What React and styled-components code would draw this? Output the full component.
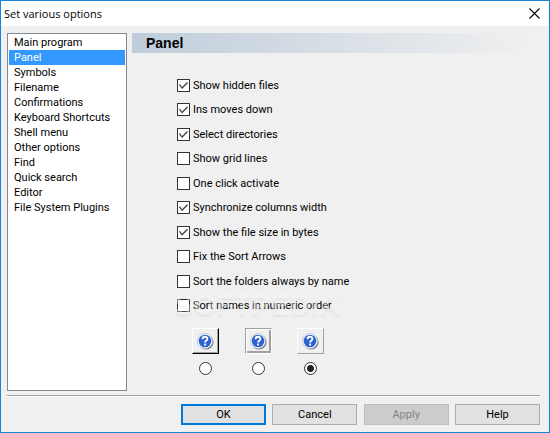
import React, { useState } from "react";
import styled, { createGlobalStyle } from "styled-components";

const sections = [
    "Main program",
    "Panel",
    "Symbols",
    "Filename",
    "Confirmations",
    "Keyboard Shortcuts",
    "Shell menu",
    "Other options",
    "Find",
    "Quick search",
    "Editor",
    "File System Plugins",
];

const panelOptions = [
    { id: "hidden", label: "Show hidden files", checked: true },
    { id: "ins", label: "Ins moves down", checked: true },
    { id: "dirs", label: "Select directories", checked: true },
    { id: "grid", label: "Show grid lines", checked: false },
    { id: "click", label: "One click activate", checked: false },
    { id: "sync", label: "Synchronize columns width", checked: true },
    { id: "bytes", label: "Show the file size in bytes", checked: true },
    { id: "arrows", label: "Fix the Sort Arrows", checked: false },
    { id: "folders", label: "Sort the folders always by name", checked: false },
    { id: "numeric", label: "Sort names in numeric order", checked: false },
];

const buttonStyles = ["raised", "framed", "flat"];

const HelpIcon = () => (
    <svg width="17" height="17" viewBox="0 0 17 17" aria-hidden="true">
        <circle cx="9" cy="9" r="7.6" fill="#777" />
        <circle cx="8" cy="8" r="7.5" fill="#fff" stroke="#b4bfd2" strokeWidth="0.8" />
        <circle cx="8" cy="8" r="6.3" fill="#2b62d0" />
        <path d="M5.6 6.2C5.6 3 10.4 3.1 10.4 5.9C10.4 7.6 8.1 7.5 8.1 9.6" fill="none" stroke="#fff" strokeWidth="1.9" />
        <rect x="7.1" y="10.6" width="2" height="1.9" fill="#fff" />
    </svg>
);

const App = () => {
    const [section, setSection] = useState("Panel");
    const [options, setOptions] = useState(panelOptions);
    const [look, setLook] = useState("flat");

    const toggle = (id) => {
        setOptions(options.map((o) => (o.id === id ? { ...o, checked: !o.checked } : o)));
    };

    return (
        <Dialog>
            <GlobalStyle />
            <TitleBar>
                <Title>Set various options</Title>
                <CloseButton type="button" aria-label="Close">
                    <svg width="11" height="11" viewBox="0 0 11 11" aria-hidden="true">
                        <path d="M0.5 0.5L10.5 10.5M10.5 0.5L0.5 10.5" stroke="#000" strokeWidth="1.1" />
                    </svg>
                </CloseButton>
            </TitleBar>
            <Body>
                <SectionList aria-label="Sections">
                    {sections.map((name) => (
                        <li key={name}>
                            <SectionButton type="button" $active={name === section} onClick={() => setSection(name)}>
                                {name}
                            </SectionButton>
                        </li>
                    ))}
                </SectionList>
                <Page>
                    <PageHeader>{section}</PageHeader>
                    <Settings>
                        <OptionList>
                            {options.map((o) => (
                                <Option key={o.id}>
                                    <Checkbox type="checkbox" checked={o.checked} onChange={() => toggle(o.id)} />
                                    {o.label}
                                </Option>
                            ))}
                            <Watermark aria-hidden="true">
                                SOFTPEDIA<sup>®</sup>
                            </Watermark>
                        </OptionList>
                        <LookRow>
                            {buttonStyles.map((name) => (
                                <Look key={name}>
                                    <IconButton type="button" $look={name} aria-label={name} onClick={() => setLook(name)}>
                                        <HelpIcon />
                                    </IconButton>
                                    <Radio
                                        type="radio"
                                        name="look"
                                        aria-label={name}
                                        checked={look === name}
                                        onChange={() => setLook(name)}
                                    />
                                </Look>
                            ))}
                        </LookRow>
                    </Settings>
                </Page>
            </Body>
            <Footer>
                <Actions>
                    <Button type="button" $primary>OK</Button>
                    <Button type="button">Cancel</Button>
                    <Button type="button" disabled>Apply</Button>
                    <Button type="button">Help</Button>
                </Actions>
            </Footer>
        </Dialog>
    );
};

export default App;

const GlobalStyle = createGlobalStyle`
  *, *::before, *::after {
    box-sizing: border-box;
  }
  body {
    margin: 0;
    font-family: Roboto, "Liberation Sans", Arial, sans-serif;
    font-size: 11px;
    color: #000;
  }
  button, input {
    font: inherit;
    margin: 0;
  }
`;

const Dialog = styled.div`
  display: flex;
  flex-direction: column;
  min-height: 100vh;
  border: 1px solid #1883d7;
  background: #f0f0f0;
`;

const TitleBar = styled.header`
  display: flex;
  align-items: center;
  justify-content: space-between;
  height: 25px;
  padding: 0 9px 0 3px;
  background: #fff;
`;

const Title = styled.h1`
  margin: 0;
  font-family: "Open Sans", "Noto Sans", sans-serif;
  font-size: 11px;
  font-weight: 400;
`;

const CloseButton = styled.button`
  display: flex;
  padding: 0;
  border: 0;
  background: none;
`;

const Body = styled.main`
  display: flex;
  flex: 1;
  gap: 5px;
  padding: 7px 17px 4px 6px;
`;

const SectionList = styled.ul`
  flex: 0 0 120px;
  margin: 0;
  padding: 1px;
  border: 1px solid #828790;
  background: #fff;
  list-style: none;
`;

const SectionButton = styled.button`
  display: block;
  width: 100%;
  height: 15px;
  padding: 0 5px;
  border: 0;
  line-height: 15px;
  text-align: left;
  background: ${(props) => (props.$active ? "#3399ff" : "transparent")};
  color: ${(props) => (props.$active ? "#fff" : "#000")};
`;

const Page = styled.section`
  flex: 1;
`;

const PageHeader = styled.h2`
  height: 20px;
  margin: 0;
  padding-left: 14px;
  font-family: "Liberation Sans", Arial, sans-serif;
  font-size: 14px;
  line-height: 20px;
  background: linear-gradient(to right, #bfcddb, #f0f0f0);
`;

const Settings = styled.div`
  padding: 26px 0 0 45px;
`;

const OptionList = styled.div`
  position: relative;
  display: flex;
  flex-direction: column;
  align-items: flex-start;
  justify-content: space-between;
  min-height: 233px;
`;

const Option = styled.label`
  display: flex;
  align-items: center;
  gap: 3px;
  line-height: 13px;
`;

const Checkbox = styled.input`
  appearance: none;
  width: 13px;
  height: 13px;
  border: 1px solid #333;
  background: #fff;
  &:checked::before {
    content: "";
    display: block;
    width: 11px;
    height: 11px;
    background: #444;
    clip-path: polygon(1px 5px, 2px 4px, 4px 7px, 9px 2px, 10px 3px, 4px 9px);
  }
`;

const Watermark = styled.span`
  position: absolute;
  left: -3px;
  bottom: -8px;
  font-family: "Liberation Sans", Arial, sans-serif;
  font-size: 29px;
  font-weight: 700;
  line-height: 30px;
  color: rgba(255, 255, 255, 0.4);
  text-shadow: 0 2px 2px rgba(0, 0, 0, 0.05);
  pointer-events: none;
  sup {
    font-size: 9px;
    line-height: 9px;
    vertical-align: top;
  }
`;

const LookRow = styled.div`
  display: flex;
  justify-content: space-between;
  width: 132px;
  margin: 16px 0 0 15px;
`;

const Look = styled.div`
  display: flex;
  flex-direction: column;
  align-items: center;
  gap: 8px;
`;

const looks = {
    raised: "border-color: #fff #000 #000 #fff; box-shadow: inset -1px -1px #a0a0a0;",
    framed: "border-color: #a0a0a0 #fff #fff #a0a0a0; box-shadow: inset 1px 1px #fff, inset -2px -2px #a0a0a0;",
    flat: "border-color: #fff #a0a0a0 #a0a0a0 #fff;",
};

const IconButton = styled.button`
  display: flex;
  align-items: center;
  justify-content: center;
  width: 27px;
  height: 26px;
  padding: 0;
  border: 1px solid;
  background: #f0f0f0;
  ${(props) => looks[props.$look]}
`;

const Radio = styled.input`
  appearance: none;
  width: 13px;
  height: 13px;
  border: 1px solid #333;
  border-radius: 50%;
  background: #fff;
  &:checked {
    background: radial-gradient(circle, #222 3px, #fff 4px);
  }
`;

const Footer = styled.footer`
  display: flex;
  justify-content: flex-end;
  margin: 0 9px 0 6px;
  padding: 8px 0 7px;
  border-top: 1px solid #a0a0a0;
  box-shadow: inset 0 1px #fff;
`;

const Actions = styled.div`
  display: flex;
  justify-content: space-between;
  width: 359px;
`;

const Button = styled.button`
  width: 85px;
  height: 21px;
  padding: 0;
  border: ${(props) => (props.$primary ? "2px solid #0078d7" : "1px solid #adadad")};
  background: #e1e1e1;
  color: #000;
  &:disabled {
    border-color: #bfbfbf;
    background: #ccc;
    color: #838383;
  }
`;
